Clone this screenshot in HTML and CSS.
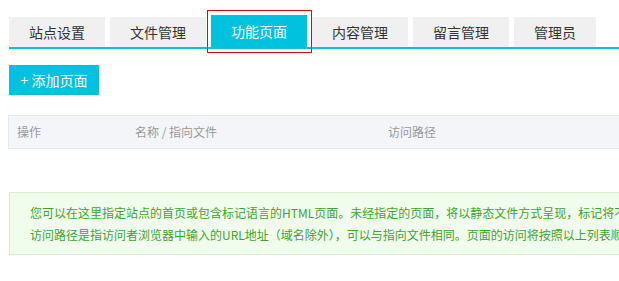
FILE: index.html
```html
<!DOCTYPE html>
<html lang="zh-CN">
<head>
  <meta charset="UTF-8" />
  <title>功能页面</title>
  <link rel="stylesheet" href="styles.css">
</head>
<body>
  <div class="page">
    <div class="tabs">
      <a class="tab">站点设置</a>
      <a class="tab">文件管理</a>
      <a class="tab active">功能页面</a>
      <a class="tab">内容管理</a>
      <a class="tab">留言管理</a>
      <a class="tab">管理员</a>
    </div>

    <button class="btn-add">+ 添加页面</button>

    <div class="table-head">
      <span>操作</span>
      <span>名称 / 指向文件</span>
      <span>访问路径</span>
    </div>

    <div class="notice">
      <p>您可以在这里指定站点的首页或包含标记语言的HTML页面。未经指定的页面，将以静态文件方式呈现，标记将不会被解析。</p>
      <p>访问路径是指访问者浏览器中输入的URL地址（域名除外），可以与指向文件相同。页面的访问将按照以上列表顺序匹配。</p>
    </div>
  </div>
</body>
</html>
```

FILE: styles.css
```css
* {
  box-sizing: border-box;
}

html, body {
  overflow: hidden;
}

body {
  margin: 0;
  background: #fff;
  color: #333;
  font-family: "Noto Sans CJK SC", "Liberation Sans", sans-serif;
}

.page {
  padding: 15px 0 0 9px;
  width: 900px;
}

.tabs {
  display: flex;
  align-items: flex-end;
  gap: 5px;
  border-bottom: 2px solid #00c1de;
}

.tab {
  height: 30px;
  padding: 0 20px;
  background: #f0f0f0;
  color: #333;
  font-size: 14px;
  line-height: 30px;
}

.tab.active {
  position: relative;
  height: 32px;
  line-height: 32px;
  background: #00c1de;
  color: #fff;
}

.tab.active::after {
  content: "";
  position: absolute;
  left: -4px;
  right: -5px;
  top: -5px;
  bottom: -6px;
  border: 1px solid #e60000;
}

.btn-add {
  display: block;
  margin-top: 16px;
  width: 90px;
  height: 30px;
  padding: 0;
  border: none;
  background: #00c1de;
  color: #fff;
  font-family: inherit;
  font-size: 14px;
}

.table-head {
  display: grid;
  grid-template-columns: 118px 253px 1fr;
  margin-top: 20px;
  margin-left: -1px;
  height: 34px;
  padding-left: 8px;
  background: #f4f5f9;
  border: 1px solid #e3e6eb;
  color: #999;
  font-size: 12px;
  line-height: 32px;
}

.notice {
  margin-top: 43px;
  height: 63px;
  padding: 9px 20px;
  background: #f1fdec;
  border: 1px solid #d9ecd0;
  color: #41a232;
  font-size: 12px;
  line-height: 22px;
}

.notice p {
  margin: 0;
  white-space: nowrap;
}
```
